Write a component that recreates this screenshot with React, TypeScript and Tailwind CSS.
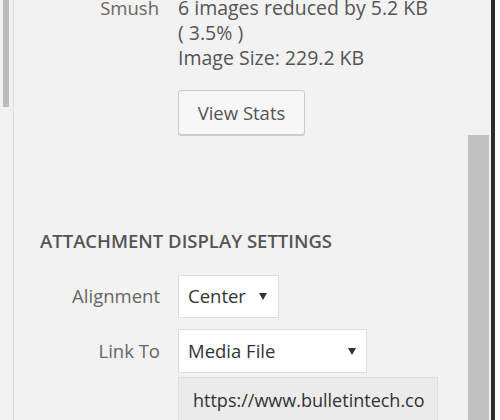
const font = { fontFamily: '"Open Sans", "Noto Sans", Arial, sans-serif' }

function Caret() {
  return (
    <svg width="10" height="10" viewBox="0 0 10 10" className="fill-[#333]">
      <polygon points="1,2 9,2 5,9" />
    </svg>
  )
}

export default function App() {
  return (
    <div className="w-[500px] h-[420px] overflow-hidden flex bg-[#f1f1f1]" style={font}>
      {/* left scroll track */}
      <div className="w-[13px] shrink-0 pl-[3px]">
        <div className="w-[6px] h-[107px] bg-[#bcbcbc]" />
      </div>
      <div className="w-px shrink-0 bg-[#dcdcdc]" />

      {/* panel */}
      <div className="flex-1 overflow-hidden bg-[#f2f2f2]">
        <div className="mt-[-5px]">
          <div className="flex text-[19.5px] leading-[25px]">
            <div className="w-[146px] text-right text-[#666] pr-[1px] text-[18.5px]">Smush</div>
            <div className="pl-[18px] text-[#555]">
              <div>6 images reduced by 5.2 KB</div>
              <div>( 3.5% )</div>
              <div>Image Size: 229.2 KB</div>
              <button className="mt-[20px] h-[45px] w-[127px] text-[18.5px] text-[#555] bg-[#f7f7f7] border border-[#cccccc] rounded-[3px] shadow-[0_1px_0_#cccccc]">
                View Stats
              </button>
            </div>
          </div>

          <h2 className="mt-[92px] pl-[26px] text-[18.5px] font-semibold text-[#555]">
            ATTACHMENT DISPLAY SETTINGS
          </h2>

          <div className="mt-[20px] flex items-center text-[18.5px]">
            <div className="w-[146px] text-right text-[#666]">Alignment</div>
            <div className="ml-[18px] w-[101px] h-[43px] bg-white border border-[#dddddd] flex items-center justify-between pl-[9px] pr-[10px] text-[#333]">
              <span>Center</span>
              <Caret />
            </div>
          </div>

          <div className="mt-[11px] flex items-center text-[18.5px]">
            <div className="w-[146px] text-right text-[#666]">Link To</div>
            <div className="ml-[18px] w-[189px] h-[44px] bg-white border border-[#dddddd] flex items-center justify-between pl-[9px] pr-[9px] text-[#333]">
              <span>Media File</span>
              <Caret />
            </div>
          </div>

          <div className="mt-[4px] flex text-[18px]">
            <div className="w-[164px]" />
            <div className="w-[260px] h-[60px] bg-[#ebebeb] border border-[#dddddd] pl-[14px] pt-[9px] text-[#333] overflow-hidden whitespace-nowrap">
              https://www.bulletintech.co
            </div>
          </div>
        </div>
      </div>

      {/* right scroll track */}
      <div className="w-[25px] shrink-0 bg-[#f1f1f1] pt-[135px] pl-[2px] pr-[2px]">
        <div className="h-full bg-[#c1c1c1]" />
      </div>
      <div className="w-[4px] shrink-0 bg-[#2b2b2b]" />
      <div className="w-[5px] shrink-0 bg-white" />
    </div>
  )
}
